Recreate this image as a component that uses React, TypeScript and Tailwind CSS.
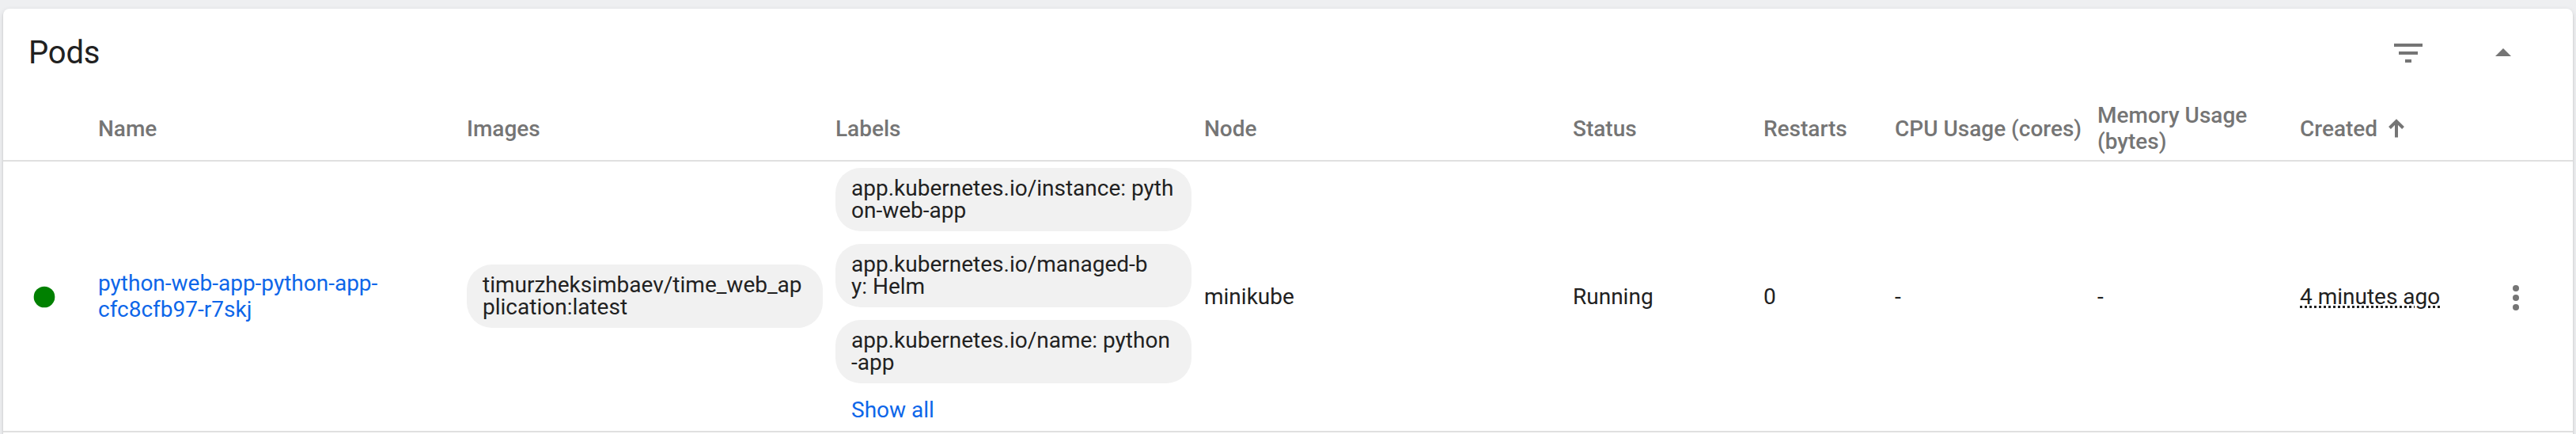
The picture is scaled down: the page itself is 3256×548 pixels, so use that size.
import type { ReactNode } from "react";

const COLS =
  "grid grid-cols-[120px_466px_466px_466px_466px_241px_166px_256px_256px_1fr] items-center";

function Chip({ children }: { children: ReactNode }) {
  return (
    <div className="h-20 w-[450px] rounded-[32px] bg-[#f1f1f1] px-5 py-3 leading-7 break-all">
      {children}
    </div>
  );
}

function Header() {
  return (
    <div
      className={`${COLS} h-[82px] border-b-2 border-[#e0e0e0] font-medium leading-[33px] text-[#757575]`}
    >
      <span />
      <span>Name</span>
      <span>Images</span>
      <span>Labels</span>
      <span>Node</span>
      <span>Status</span>
      <span>Restarts</span>
      <span className="whitespace-nowrap">CPU Usage (cores)</span>
      <span className="w-[220px]">Memory Usage (bytes)</span>
      <span className="flex items-center gap-3.5">
        Created
        <svg width="20" height="24" viewBox="0 0 20 24" fill="none" stroke="#757575">
          <path d="M10 23.5V3" strokeWidth="4" />
          <path d="M1.5 11.5L10 3L18.5 11.5" strokeWidth="4" />
        </svg>
      </span>
    </div>
  );
}

function PodRow() {
  return (
    <div
      className={`${COLS} h-[342px] border-b-2 border-[#e0e0e0] leading-[33px] text-[#212121]`}
    >
      <svg className="mt-px ml-9" width="32" height="32" viewBox="0 0 24 24" fill="#008000">
        <circle cx="12" cy="12" r="10" />
      </svg>
      <a className="w-[370px] text-[#0d66e9]">
        python-web-app-python-app-
        <br />
        cfc8cfb97-r7skj
      </a>
      <Chip>timurzheksimbaev/time_web_application:latest</Chip>
      <div className="flex flex-col gap-4 self-start pt-2">
        <Chip>
          app.kubernetes.io/instance: pyth
          <br />
          on-web-app
        </Chip>
        <Chip>
          app.kubernetes.io/managed-b
          <br />
          y: Helm
        </Chip>
        <Chip>
          app.kubernetes.io/name: python
          <br />
          -app
        </Chip>
        <a className="mt-px pl-5 text-[#0d66e9]">Show all</a>
      </div>
      <span>minikube</span>
      <span>Running</span>
      <span>0</span>
      <span>-</span>
      <span>-</span>
      <div className="flex items-center justify-between pr-12">
        <span className="underline decoration-dotted decoration-[3px] underline-offset-[2px]">
          4 minutes ago
        </span>
        <svg className="mt-1" width="48" height="48" viewBox="0 0 24 24" fill="#757575">
          <circle cx="12" cy="6" r="2" />
          <circle cx="12" cy="12" r="2" />
          <circle cx="12" cy="18" r="2" />
        </svg>
      </div>
    </div>
  );
}

export default function App() {
  return (
    <div className="h-[548px] w-[3256px] overflow-hidden bg-[#eeeff1] px-1 pt-[11px] font-['Roboto',sans-serif] text-[28px]">
      <div className="h-[600px] rounded-lg bg-white shadow-[0_4px_2px_-2px_rgba(0,0,0,0.2),0_2px_2px_0_rgba(0,0,0,0.14),0_2px_6px_0_rgba(0,0,0,0.12)]">
        <div className="flex h-[111px] items-center justify-between pr-16 pl-8">
          <h2 className="text-[40px] tracking-[-0.2px] text-[#212121]">Pods</h2>
          <div className="flex gap-[72px]">
            <svg width="48" height="48" viewBox="0 0 24 24" fill="#757575">
              <path d="M10 18h4v-2h-4v2zM3 6v2h18V6H3zm3 7h12v-2H6v2z" />
            </svg>
            <svg width="48" height="48" viewBox="0 0 24 24" fill="#757575">
              <path d="M7 14l5-5 5 5z" />
            </svg>
          </div>
        </div>
        <Header />
        <PodRow />
      </div>
    </div>
  );
}
